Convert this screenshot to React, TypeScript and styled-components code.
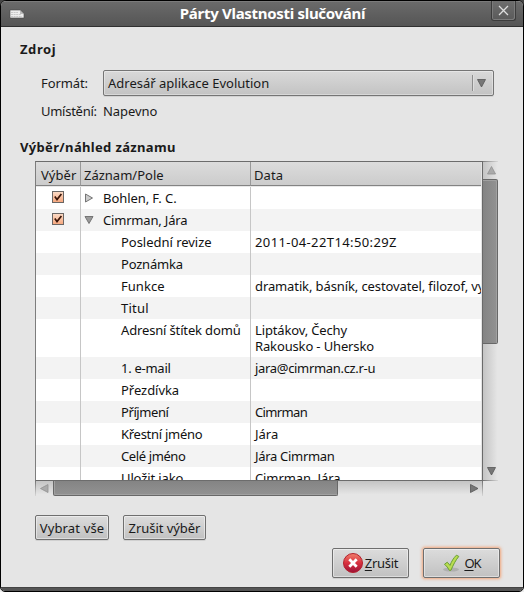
import React from 'react';
import styled, { createGlobalStyle } from 'styled-components';

const GlobalStyle = createGlobalStyle`
  * { box-sizing: border-box; }
  body { margin: 0; background: linear-gradient(#444 0 50%, #eee 50%); overflow: hidden; }
`;

const Window = styled.div`
  width: 524px;
  height: 592px;
  display: flex;
  flex-direction: column;
  border: 1px solid #000;
  border-radius: 6px 6px 5px 5px;
  overflow: hidden;
  background: #e5e5e5;
  color: #1a1a1a;
  font: 13px/16px 'Noto Sans', 'Open Sans', sans-serif;
  white-space: nowrap;
`;

const TitleBar = styled.header`
  height: 26px;
  flex: none;
  display: grid;
  grid-template-columns: 40px 1fr 40px;
  border-top: 1px solid #7b7b7b;
  border-bottom: 1px solid #303030;
  background: linear-gradient(#6a6a6a, #555);
`;

const TitleIcon = styled.svg`
  margin: 7px 0 0 8px;
`;

const Title = styled.h1`
  margin: 0;
  padding: 1px 0 0 21px;
  text-align: center;
  font-size: 15px;
  line-height: 20px;
  font-weight: 700;
  letter-spacing: -0.3px;
  color: #fff;
`;

const CloseButton = styled.button`
  width: 25px;
  height: 20px;
  margin: -1px 0 0 8px;
  padding: 0;
  display: flex;
  align-items: center;
  justify-content: center;
  border: 1px solid #3c3c3c;
  border-top: 0;
  border-radius: 0 0 3px 3px;
  background: linear-gradient(#6e6e6e, #5a5a5a);
  box-shadow: inset 1px 0 #7b7b7b, inset -1px -1px #7b7b7b;
`;

const Body = styled.main`
  flex: 1;
  padding: 14px 23px 0 19px;
`;

const BottomEdge = styled.footer`
  height: 4px;
  flex: none;
  background: #555;
  border-top: 1px solid #444;
`;

const Text = styled.span<{ $track?: number }>`
  letter-spacing: ${(p) => p.$track ?? 0}px;
`;

const Heading = styled.h2<{ $track: number }>`
  margin: 0;
  font-size: 13px;
  line-height: 16px;
  font-weight: 700;
  letter-spacing: ${(p) => p.$track}px;
`;

const Form = styled.div`
  display: grid;
  grid-template-columns: 62px 392px;
  grid-template-rows: 28px 28px;
  align-items: center;
  margin: 12px 0 14px 21px;
`;

const Combo = styled.div`
  height: 26px;
  margin-right: 1px;
  padding: 0 7px 0 4px;
  display: flex;
  align-items: center;
  border: 1px solid #757575;
  border-radius: 2px;
  background: linear-gradient(#d9d9d9, #c3c3c3);
  box-shadow: inset 0 0 0 1px rgba(255, 255, 255, 0.35), 0 1px #d2d2d2;
`;

const ComboArrow = styled.span`
  height: 16px;
  margin-left: auto;
  padding-left: 4px;
  display: flex;
  align-items: center;
  border-left: 1px solid #8e8e8e;
  box-shadow: inset 1px 0 #dedede;
`;

const Tree = styled.section`
  display: grid;
  grid-template-columns: 448px 16px;
  grid-template-rows: 320px 16px;
  margin: 6px 0 18px 15px;
`;

const Viewport = styled.div`
  overflow: hidden;
  border: 1px solid #6c6c6c;
  border-left-color: #7d7d7d;
  border-right-color: #6a6a6a;
  background: #fff;
  box-shadow: inset -1px 0 #e4e4e4;
`;

const columns = `
  display: grid;
  grid-template-columns: 45px 170px 230px;
  width: 445px;
`;

const HeaderRow = styled.div`
  ${columns}
  height: 25px;
  border-bottom: 1px solid #e8e8e8;
  background: linear-gradient(#dcdcdc, #cbcbcb);
`;

const HeaderCell = styled.div<{ $last?: boolean; $pad?: number }>`
  height: 24px;
  padding: 5px 0 0 ${(p) => p.$pad ?? 3}px;
  overflow: hidden;
  border-right: ${(p) => (p.$last ? '0' : '1px solid #999')};
  border-bottom: 1px solid #838383;
`;

const DataRow = styled.div<{ $tall?: boolean }>`
  ${columns}
  height: ${(p) => (p.$tall ? 38 : 22)}px;
  background: #fff;
  color: #111;
  &:nth-child(odd) { background: #f3f3f3; }
`;

const CheckCell = styled.div`
  padding: 4px 0 0 16px;
  border-right: 1px solid #c6c6c6;
`;

const NameCell = styled.div<{ $child?: boolean }>`
  display: flex;
  padding: 3px 0 0 ${(p) => (p.$child ? 40 : 2)}px;
  border-right: 1px solid #c6c6c6;
`;

const DataCell = styled.div`
  padding: 3px 0 0 4px;
  overflow: hidden;
`;

const Expander = styled.svg`
  width: 12px;
  height: 12px;
  margin: 2px 8px 0 0;
`;

const Check = styled.svg`
  display: block;
`;

const VTrack = styled.div`
  display: flex;
  flex-direction: column;
  justify-content: space-between;
  align-items: center;
  padding-right: 1px;
  background: linear-gradient(90deg, #c4c4c4, #e5e5e5 90%);
`;

const VStart = styled.div`
  width: 15px;
  display: flex;
  flex-direction: column;
  align-items: center;
  border-top: 1px solid;
  border-image: linear-gradient(90deg, #777, #dedede) 1;
  & svg { margin: 4px 0 4px 1px; }
`;

const VThumb = styled.div`
  width: 15px;
  height: 165px;
  border: 1px solid #686868;
  border-left: 0;
  border-radius: 0 2px 2px 0;
  background: linear-gradient(90deg, #848484, #929292);
  box-shadow: inset -1px 1px #a0a0a0;
`;

const VEnd = styled.div`
  width: 15px;
  height: 14px;
  padding-left: 4px;
  display: flex;
  align-items: flex-start;
  border-bottom: 1px solid;
  border-image: linear-gradient(90deg, #6c6c6c, #dedede) 1;
`;

const HTrack = styled.div`
  display: flex;
  align-items: flex-start;
  justify-content: space-between;
  height: 15px;
  background: linear-gradient(#c4c4c4, #e5e5e5 90%);
  border-left: 1px solid;
  border-right: 1px solid;
  border-image: linear-gradient(#6c6c6c, #dedede) 1;
  & > svg { margin: 3px 3px 0 0; }
`;

const HStart = styled.div`
  display: flex;
  & > svg { margin: 3px 4px 0 4px; }
`;

const HThumb = styled.div`
  width: 285px;
  height: 15px;
  border: 1px solid #686868;
  border-top: 0;
  border-radius: 0 0 2px 2px;
  background: linear-gradient(#848484, #929292);
  box-shadow: inset 1px -1px #a0a0a0;
`;

const ButtonRow = styled.div<{ $end?: boolean }>`
  display: flex;
  gap: 14px;
  margin: ${(p) => (p.$end ? '8px 0 0' : '0 0 0 15px')};
  justify-content: ${(p) => (p.$end ? 'flex-end' : 'flex-start')};
`;

const Button = styled.button<{ $w: number; $h: number; $focus?: boolean }>`
  width: ${(p) => p.$w}px;
  height: ${(p) => p.$h}px;
  padding: 0;
  display: flex;
  align-items: center;
  justify-content: center;
  gap: 2px;
  border: 1px solid #6f6f6f;
  border-radius: 2px;
  background: linear-gradient(#dcdcdc, #c1c1c1);
  box-shadow: inset 0 0 0 1px rgba(255, 255, 255, 0.45),
    ${(p) => (p.$focus ? '0 0 3px 1px rgba(246, 150, 96, 0.8)' : '0 1px #d0d0d0')};
  color: #1a1a1a;
  font: inherit;
  & u { text-underline-offset: 2px; }
`;

type Dir = 'up' | 'down' | 'left' | 'right';
const shapes: Record<Dir, string> = {
  down: 'M.5 .5H8.5L4.5 8Z',
  up: 'M.5 8H8.5L4.5 .5Z',
  left: 'M8 .5V8.5L.5 4.5Z',
  right: 'M.5 .5V8.5L8 4.5Z',
};

function Arrow({ dir, dim }: { dir: Dir; dim?: boolean }) {
  return (
    <svg width="9" height="9" viewBox="0 0 9 9">
      <path d={shapes[dir]} fill={dim ? '#aaa' : '#777'} stroke={dim ? '#929292' : '#555'} strokeWidth=".8" />
    </svg>
  );
}

function Checkbox() {
  return (
    <Check width="12" height="12" viewBox="0 0 12 12">
      <defs>
        <linearGradient id="box" x2="0" y2="1">
          <stop stopColor="#fbdcc8" />
          <stop offset="1" stopColor="#f6a67c" />
        </linearGradient>
      </defs>
      <rect x=".5" y=".5" width="11" height="11" fill="url(#box)" stroke="#6a6664" />
      <path d="M2.8 5.6 5 8.6 9.4 3" fill="none" stroke="#3a1508" strokeWidth="1.7" />
    </Check>
  );
}

function Toggle({ open }: { open: boolean }) {
  return (
    <Expander viewBox="0 0 12 12">
      <path d={open ? 'M2 2.5H10L6 9.5Z' : 'M2.5 2V10L9.5 6Z'} fill={open ? '#999' : '#ccc'} stroke="#747474" />
    </Expander>
  );
}

interface Field { name: string; nt: number; data?: string[]; dt?: number }

const fields: Field[] = [
  { name: 'Poslední revize', nt: -0.03, data: ['2011-04-22T14:50:29Z'], dt: 0.39 },
  { name: 'Poznámka', nt: -0.2 },
  { name: 'Funkce', nt: 0.04, data: ['dramatik, básník, cestovatel, filozof, vynálezce'], dt: -0.11 },
  { name: 'Titul', nt: 0.22 },
  { name: 'Adresní štítek domů', nt: -0.15, data: ['Liptákov, Čechy', 'Rakousko - Uhersko'], dt: -0.14 },
  { name: '1. e-mail', nt: -0.27, data: ['jara@cimrman.cz.r-u'], dt: -0.32 },
  { name: 'Přezdívka', nt: -0.04 },
  { name: 'Příjmení', nt: -0.42, data: ['Cimrman'], dt: -0.65 },
  { name: 'Křestní jméno', nt: -0.28, data: ['Jára'], dt: 0 },
  { name: 'Celé jméno', nt: -0.39, data: ['Jára Cimrman'], dt: -0.3 },
  { name: 'Uložit jako', nt: -0.12, data: ['Cimrman, Jára'], dt: -0.1 },
];

const contacts = [
  { name: 'Bohlen, F. C.', track: -0.07, open: false },
  { name: 'Cimrman, Jára', track: -0.18, open: true },
];

export default function App() {
  return (
    <>
      <GlobalStyle />
      <Window>
        <TitleBar>
          <TitleIcon width="16" height="10" viewBox="0 0 16 10">
            <path d="M1 1H11L15 5V9H1Z" fill="#ededed" stroke="#484848" strokeWidth=".6" />
            <path d="M2 3.5H9M2 5.5H12M2 7.5H13" stroke="#c8c8c8" strokeDasharray="2 .6" />
            <path d="M11 1V5H15Z" fill="#bbb" />
          </TitleIcon>
          <Title>Párty Vlastnosti slučování</Title>
          <CloseButton aria-label="Zavřít">
            <svg width="11" height="11" viewBox="0 0 11 11">
              <path d="M1 1 10 10M10 1 1 10" stroke="#dedede" strokeWidth="1.3" />
            </svg>
          </CloseButton>
        </TitleBar>
        <Body>
          <Heading $track={0.57}>Zdroj</Heading>
          <Form>
            <Text $track={-0.1}>Formát:</Text>
            <Combo>
              <Text>Adresář aplikace Evolution</Text>
              <ComboArrow><Arrow dir="down" /></ComboArrow>
            </Combo>
            <Text $track={-0.27}>Umístění:</Text>
            <Text $track={-0.06}>Napevno</Text>
          </Form>
          <Heading $track={0.34}>Výběr/náhled záznamu</Heading>
          <Tree>
            <Viewport>
              <HeaderRow>
                <HeaderCell $pad={5}><Text $track={0.06}>Výběr</Text></HeaderCell>
                <HeaderCell><Text>Záznam/Pole</Text></HeaderCell>
                <HeaderCell $last><Text $track={0.1}>Data</Text></HeaderCell>
              </HeaderRow>
              {contacts.map((c) => (
                <DataRow key={c.name}>
                  <CheckCell><Checkbox /></CheckCell>
                  <NameCell><Toggle open={c.open} /><Text $track={c.track}>{c.name}</Text></NameCell>
                  <DataCell />
                </DataRow>
              ))}
              {fields.map((f) => (
                <DataRow key={f.name} $tall={(f.data?.length ?? 0) > 1}>
                  <CheckCell />
                  <NameCell $child><Text $track={f.nt}>{f.name}</Text></NameCell>
                  <DataCell>
                    {f.data?.map((line) => <div key={line}><Text $track={f.dt}>{line}</Text></div>)}
                  </DataCell>
                </DataRow>
              ))}
            </Viewport>
            <VTrack>
              <VStart><Arrow dir="up" dim /><VThumb /></VStart>
              <VEnd><Arrow dir="down" /></VEnd>
            </VTrack>
            <HTrack>
              <HStart><Arrow dir="left" dim /><HThumb /></HStart>
              <Arrow dir="right" />
            </HTrack>
          </Tree>
          <ButtonRow>
            <Button $w={74} $h={25}><Text $track={0.14}>Vybrat vše</Text></Button>
            <Button $w={83} $h={25}><Text $track={-0.05}>Zrušit výběr</Text></Button>
          </ButtonRow>
          <ButtonRow $end>
            <Button $w={77} $h={30}>
              <svg width="20" height="20" viewBox="0 0 20 20">
                <defs>
                  <linearGradient id="stop" x2="0" y2="1">
                    <stop stopColor="#f0806c" />
                    <stop offset=".5" stopColor="#d8303e" />
                    <stop offset="1" stopColor="#9c1238" />
                  </linearGradient>
                </defs>
                <circle cx="10" cy="10" r="9.5" fill="url(#stop)" stroke="#b3202c" />
                <path d="M6.3 6.3 13.7 13.7M13.7 6.3 6.3 13.7" stroke="#fff" strokeWidth="2.8" />
              </svg>
              <Text $track={-0.28}><u>Z</u>rušit</Text>
            </Button>
            <Button $w={77} $h={30} $focus>
              <svg width="20" height="20" viewBox="0 0 20 20">
                <ellipse cx="9" cy="16.5" rx="8" ry="2" fill="#000" opacity=".12" />
                <path d="M2.5 11.2 5.3 9.2 8 12.4C9.4 8.6 11.5 5 14.4 2.2L16.8 3.4C13.4 7.6 11.4 11.6 9 17.2L7.4 17.4C6.2 15 4.6 13 2.5 11.2Z" fill="#b9dc50" stroke="#699f34" strokeLinejoin="round" />
              </svg>
              <Text $track={-1}><u>O</u>K</Text>
            </Button>
          </ButtonRow>
        </Body>
        <BottomEdge />
      </Window>
    </>
  );
}
